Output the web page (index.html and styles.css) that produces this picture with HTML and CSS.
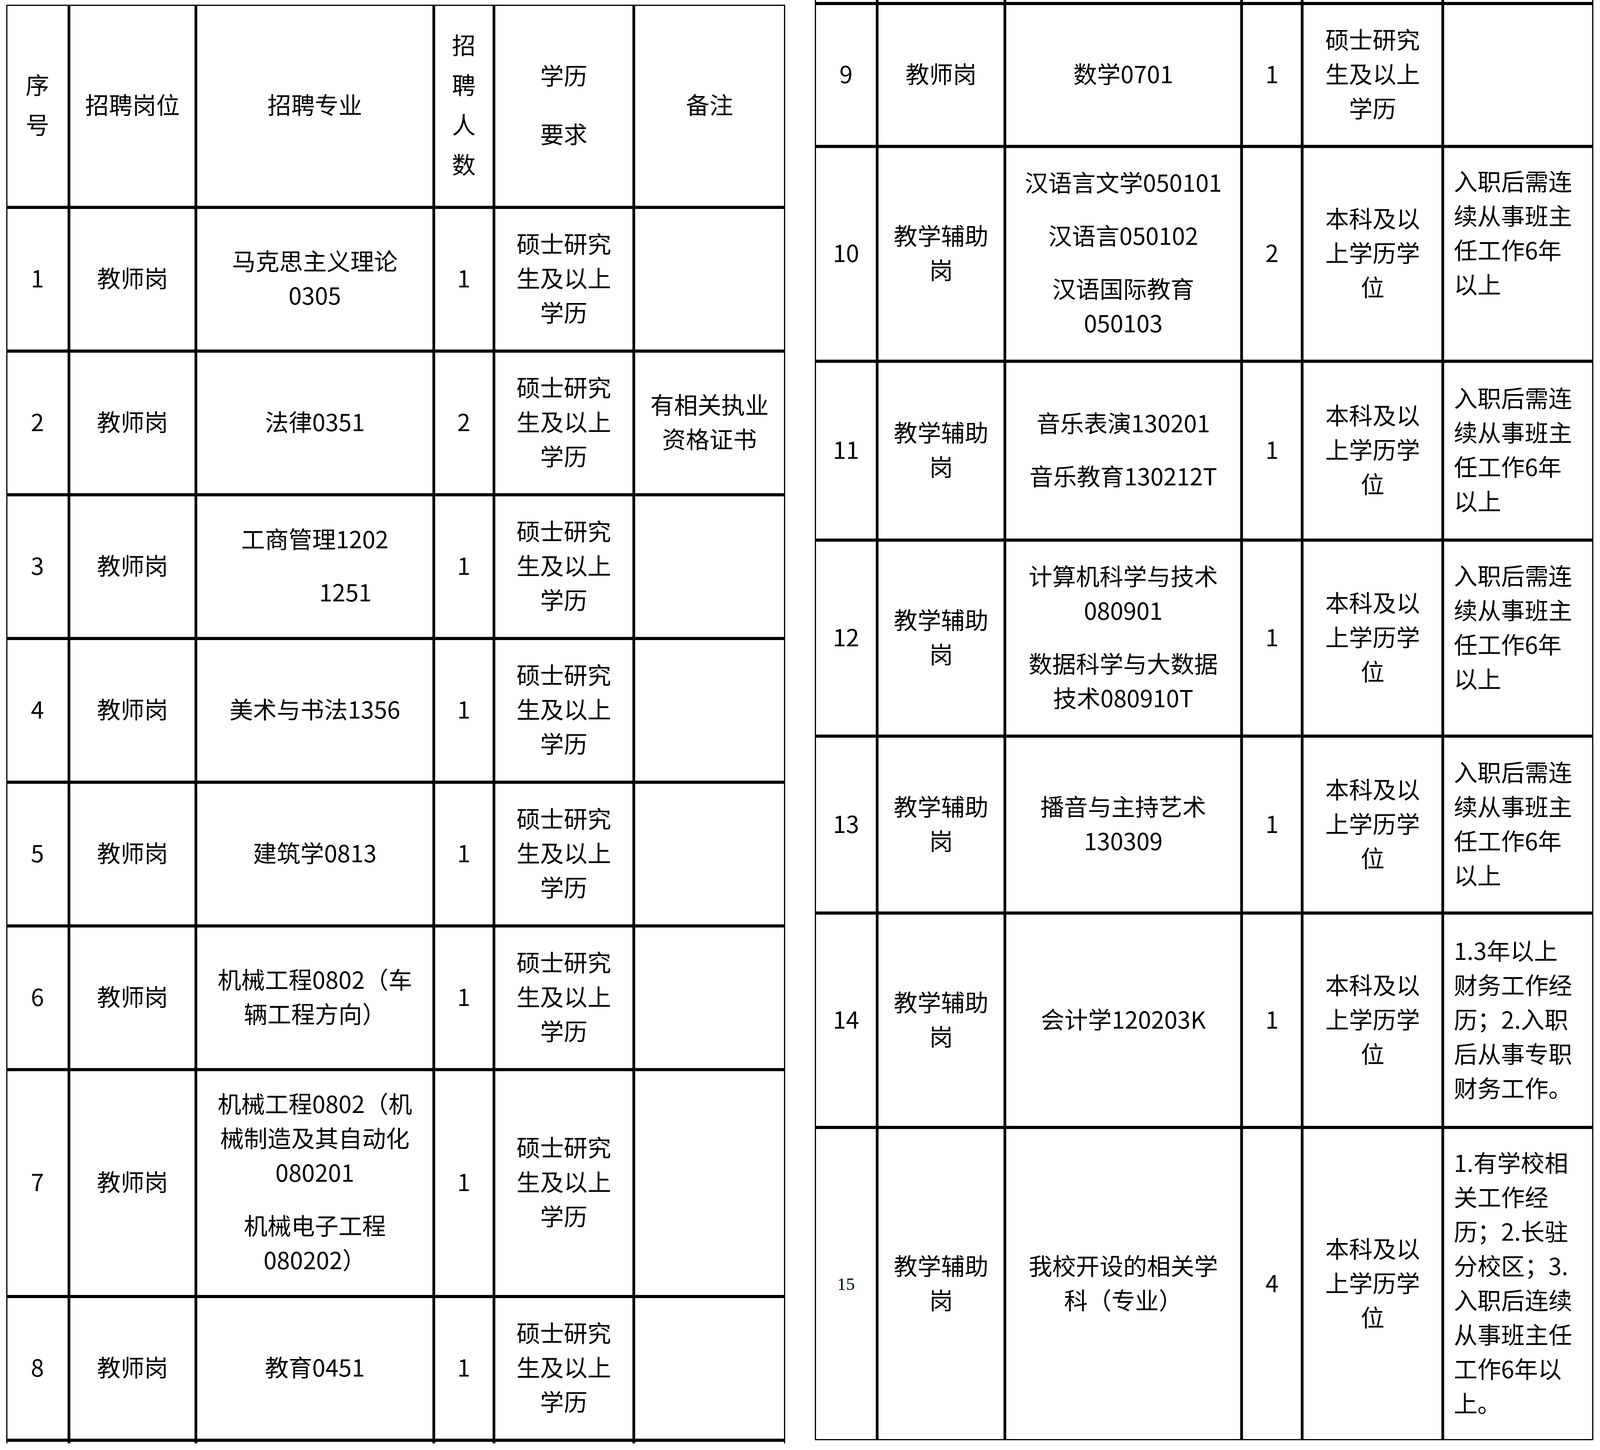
FILE: index.html
```html
<!DOCTYPE html>
<html lang="zh-CN">
<head>
<meta charset="utf-8">
<title>招聘岗位表</title>
<link rel="stylesheet" href="styles.css">
</head>
<body>
<div class="page">
  <table class="sheet sheet-left">
    <colgroup>
      <col class="col-no"><col class="col-post"><col class="col-major"><col class="col-num"><col class="col-edu"><col class="col-note">
    </colgroup>
    <tr class="head">
      <td>序号</td>
      <td>招聘岗位</td>
      <td>招聘专业</td>
      <td>招聘人数</td>
      <td><div class="p">学历</div><div class="p">要求</div></td>
      <td>备注</td>
    </tr>
    <tr class="row">
      <td>1</td><td>教师岗</td><td>马克思主义理论0305</td><td>1</td><td>硕士研究生及以上学历</td><td></td>
    </tr>
    <tr class="row">
      <td>2</td><td>教师岗</td><td>法律0351</td><td>2</td><td>硕士研究生及以上学历</td><td>有相关执业资格证书</td>
    </tr>
    <tr class="row">
      <td>3</td><td>教师岗</td><td><div class="p">工商管理1202</div><div class="p shift">1251</div></td><td>1</td><td>硕士研究生及以上学历</td><td></td>
    </tr>
    <tr class="row">
      <td>4</td><td>教师岗</td><td>美术与书法1356</td><td>1</td><td>硕士研究生及以上学历</td><td></td>
    </tr>
    <tr class="row">
      <td>5</td><td>教师岗</td><td>建筑学0813</td><td>1</td><td>硕士研究生及以上学历</td><td></td>
    </tr>
    <tr class="row">
      <td>6</td><td>教师岗</td><td>机械工程0802（车辆工程方向）</td><td>1</td><td>硕士研究生及以上学历</td><td></td>
    </tr>
    <tr class="row-tall">
      <td>7</td><td>教师岗</td><td><div class="p">机械工程0802（机械制造及其自动化080201</div><div class="p">机械电子工程080202）</div></td><td>1</td><td>硕士研究生及以上学历</td><td></td>
    </tr>
    <tr class="row">
      <td>8</td><td>教师岗</td><td>教育0451</td><td>1</td><td>硕士研究生及以上学历</td><td></td>
    </tr>
    <tr class="tail">
      <td></td><td></td><td></td><td></td><td></td><td></td>
    </tr>
  </table>

  <table class="sheet sheet-right">
    <colgroup>
      <col class="col-no"><col class="col-post"><col class="col-major"><col class="col-num"><col class="col-edu"><col class="col-note">
    </colgroup>
    <tr class="cut">
      <td></td><td></td><td></td><td></td><td></td><td></td>
    </tr>
    <tr class="r9">
      <td>9</td><td>教师岗</td><td>数学0701</td><td>1</td><td>硕士研究生及以上学历</td><td></td>
    </tr>
    <tr class="r10">
      <td>10</td><td>教学辅助岗</td>
      <td><div class="p">汉语言文学050101</div><div class="p">汉语言050102</div><div class="p">汉语国际教育050103</div></td>
      <td>2</td><td>本科及以上学历学位</td><td class="lift-lg">入职后需连续从事班主任工作6年以上</td>
    </tr>
    <tr class="r11">
      <td>11</td><td>教学辅助岗</td>
      <td><div class="p">音乐表演130201</div><div class="p">音乐教育130212T</div></td>
      <td>1</td><td>本科及以上学历学位</td><td>入职后需连续从事班主任工作6年以上</td>
    </tr>
    <tr class="r12">
      <td>12</td><td>教学辅助岗</td>
      <td><div class="p">计算机科学与技术080901</div><div class="p">数据科学与大数据技术080910T</div></td>
      <td>1</td><td>本科及以上学历学位</td><td class="lift-sm">入职后需连续从事班主任工作6年以上</td>
    </tr>
    <tr class="r13">
      <td>13</td><td>教学辅助岗</td><td>播音与主持艺术130309</td><td>1</td><td>本科及以上学历学位</td><td>入职后需连续从事班主任工作6年以上</td>
    </tr>
    <tr class="r14">
      <td>14</td><td>教学辅助岗</td><td>会计学120203K</td><td>1</td><td>本科及以上学历学位</td><td>1.3年以上财务工作经历；2.入职后从事专职财务工作。</td>
    </tr>
    <tr class="r15">
      <td><span class="seq-small">15</span></td><td>教学辅助岗</td><td>我校开设的相关学科（专业）</td><td>4</td><td>本科及以上学历学位</td><td>1.有学校相关工作经历；2.长驻分校区；3.入职后连续从事班主任工作6年以上。</td>
    </tr>
  </table>
</div>
</body>
</html>
```

FILE: styles.css
```css
:root {
  /* one horizontal pixel of the 4190px-wide original */
  --u: calc(100vw / 4190);
}

html, body {
  margin: 0;
  padding: 0;
  background: #ffffff;
}

body {
  overflow: hidden;
  font-family: "Noto Sans CJK SC", "Noto Sans", sans-serif;
  font-size: calc(62 * var(--u));
  line-height: 88px;
  color: #000000;
}

.page {
  display: flex;
  align-items: flex-start;
  gap: calc(78 * var(--u));
  padding-left: calc(16 * var(--u));
}

.sheet {
  border-collapse: collapse;
  table-layout: fixed;
  flex: none;
}

.sheet-left {
  width: calc(2037 * var(--u));
  margin-top: 12px;
}

.sheet-right {
  width: calc(2036 * var(--u));
}

/* column widths (distance between rule centres) */
.sheet-left .col-no { width: calc(163 * var(--u)); }
.sheet-left .col-post { width: calc(333 * var(--u)); }
.sheet-left .col-major { width: calc(622 * var(--u)); }
.sheet-left .col-num { width: calc(158 * var(--u)); }
.sheet-left .col-edu { width: calc(366 * var(--u)); }
.sheet-left .col-note { width: calc(395 * var(--u)); }

.sheet-right .col-no { width: calc(162 * var(--u)); }
.sheet-right .col-post { width: calc(334 * var(--u)); }
.sheet-right .col-major { width: calc(620 * var(--u)); }
.sheet-right .col-num { width: calc(159 * var(--u)); }
.sheet-right .col-edu { width: calc(368 * var(--u)); }
.sheet-right .col-note { width: calc(393 * var(--u)); }

/* cell rules */
.sheet td {
  padding: 0;
  border: none;
  border-left: 7px solid #000;
  border-top: 8px solid #000;
  text-align: center;
  vertical-align: middle;
}

.sheet td:first-child {
  border-left-width: 3px;
}

.sheet td:last-child {
  border-right: 3px solid #000;
}

.sheet-left .head td {
  border-top-width: 3px;
}

.sheet-right .cut td {
  border-top: none;
}

.sheet-right tr:last-child td {
  border-bottom: 3px solid #000;
}

/* column paddings that control wrapping (bottom padding lifts text a touch) */
.sheet td:nth-child(1) { padding: 0 calc(20 * var(--u)) 10px; }
.sheet td:nth-child(2) { padding: 0 calc(25 * var(--u)) 10px; }
.sheet td:nth-child(3) { padding: 0 calc(35 * var(--u)) 10px; }
.sheet td:nth-child(4) { padding: 0 calc(20 * var(--u)) 10px; }
.sheet td:nth-child(5) { padding: 0 calc(35 * var(--u)) 10px; }
.sheet-left td:nth-child(6) { padding: 0 calc(30 * var(--u)) 10px; }
.sheet-right td:nth-child(6) {
  padding: 0 calc(42 * var(--u)) 10px calc(25 * var(--u));
  text-align: left;
}

.sheet-right td.lift-lg { padding-bottom: 112px; }
.sheet-right td.lift-sm { padding-bottom: 60px; }

.sheet tr.cut td,
.sheet tr.tail td {
  padding: 0;
}

/* row heights */
.head { height: 517px; }
.head td { line-height: 102px; }
.row { height: 368px; }
.row-tall { height: 581px; }
.tail { height: 8px; }

.cut { height: 9px; }
.r9 { height: 366px; }
.r10 { height: 550px; }
.r11 { height: 458px; }
.r12 { height: 502px; }
.r13 { height: 453px; }
.r14 { height: 549px; }
.r15 { height: 799px; }

/* paragraphs inside a cell */
.p + .p {
  margin-top: 48px;
}

.shift {
  padding-left: calc(160 * var(--u));
}

.seq-small {
  font-family: "Liberation Serif", serif;
  font-size: calc(46 * var(--u));
}
```
